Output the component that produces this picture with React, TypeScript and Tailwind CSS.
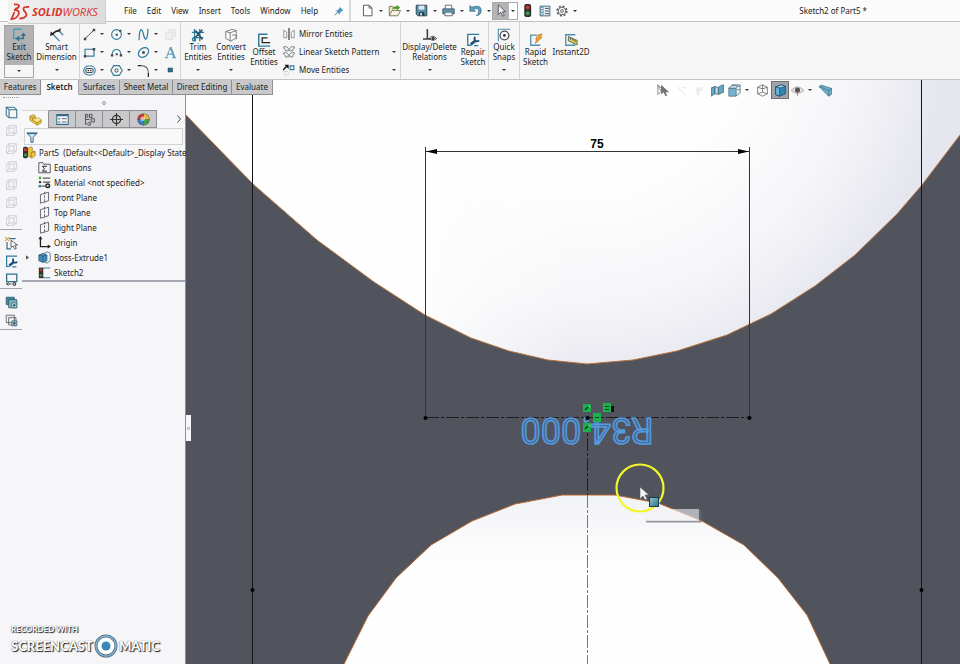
import React from 'react';

type IconName = string;

const INK = '#4a4f55';
const TEAL = '#2f7d9b';

const ICONS: Record<IconName, React.ReactNode> = {
  // ribbon
  exit: (
    <g fill="none" strokeWidth="1.6">
      <path d="M11 1.500H2V12h4" stroke="#4e9cba" />
      <path d="M6 12h7V7M10.500 9L13 6.500 15.500 9M8 9.500L5.500 12 8 14.500" stroke="#2f7391" />
    </g>
  ),
  dimension: (
    <g fill="none" stroke={INK} strokeWidth="1.300">
      <path d="M3 7Q6 3 11 3" strokeWidth="1.800" stroke="#222" />
      <path d="M0 9l1-5 4 3.500zM12 0v5.500L8 3z" fill="#222" stroke="none" />
      <path d="M4 8l7 7M10 3l5 5" stroke={TEAL} />
    </g>
  ),
  line: (
    <g>
      <path d="M2.500 13L13.500 2.500" stroke={INK} strokeWidth="1.200" />
      <path d="M1 12h3v3H1zM12 1h3v3h-3z" fill="#444" />
    </g>
  ),
  circle: (
    <g>
      <circle cx="8" cy="8" r="6" fill="none" stroke={TEAL} strokeWidth="1.300" />
      <path d="M7 7h2.500v2.500H7zM11.500 2H14v2.500h-2.500z" fill="#444" />
    </g>
  ),
  spline: <path d="M2.500 15C3-1 6-1 8 8s5 8 5.500-7" fill="none" stroke={TEAL} strokeWidth="1.500" />,
  ghost: (
    <g fill="#eeeeef" stroke="#dddde0">
      <path d="M2 5h9v9H2zM5 2h9v9" />
    </g>
  ),
  rect: (
    <g>
      <path d="M2.500 4h11v8.500h-11z" fill="none" stroke={TEAL} strokeWidth="1.400" />
      <path d="M1 11h3v3H1zM12 2.500h3v3h-3z" fill="#444" />
    </g>
  ),
  arc: (
    <g>
      <path d="M2.500 11C3 2 13 2 13.500 11" fill="none" stroke={TEAL} strokeWidth="1.300" />
      <path d="M1 10h3v3H1zM12 10h3v3h-3zM7 9h2.500v2.500H7z" fill="#444" />
    </g>
  ),
  ellipse: (
    <g>
      <ellipse cx="8" cy="8" rx="7" ry="5.200" transform="rotate(-40 8 8)" fill="none" stroke={TEAL} strokeWidth="1.500" />
      <path d="M6.500 6.500h3v3h-3z" fill="#333" />
    </g>
  ),
  sketchText: (
    <g fill="none" stroke="#5a9bbd">
      <path d="M1 14.500h4M10 14.500h5M4.500 10h6" strokeWidth="1.300" />
      <path d="M3 14L8 1.500" strokeWidth="1.200" />
      <path d="M8 1.500l5 13" strokeWidth="2.400" />
    </g>
  ),
  slot: (
    <g fill="none" strokeWidth="1.300">
      <rect x="1" y="2.500" width="14" height="11" rx="5.500" stroke={TEAL} />
      <rect x="3.500" y="5.500" width="9" height="5" rx="2" stroke={INK} />
      <path d="M6.500 7v2M9.500 7v2" stroke="#222" strokeWidth="1.500" />
    </g>
  ),
  polygon: (
    <g fill="none">
      <path d="M4.500 2h7L15 8l-3.500 6h-7L1 8z" stroke={TEAL} strokeWidth="1.400" />
      <circle cx="8" cy="8" r="2" stroke="#444" strokeWidth="1.200" />
    </g>
  ),
  fillet: (
    <g fill="none">
      <path d="M1 2h4M14 11v5" stroke="#222" strokeWidth="1.500" />
      <path d="M5 2q9 0 9 9" stroke="#6d7378" strokeWidth="1.500" />
    </g>
  ),
  point: <path d="M4 4h9v8H4z" fill="#2b6d8f" stroke="#1f4356" />,
  trim: (
    <g fill="none" stroke={TEAL} strokeWidth="1.500">
      <path d="M4 1v14M10 1v14M1 5h14M2 11h12" />
      <path d="M5 3l8 10M13 2L4 12" stroke="#27566c" strokeWidth="2" />
      <circle cx="3.500" cy="13" r="1.800" />
    </g>
  ),
  convert: (
    <g fill="#fafafa" stroke="#6e7377">
      <path d="M2 4l7-2.500L14 3v8l-6 4-6-3z" />
      <path d="M2 4l5 1.500L14 3M7 5.500V15M9 8h5v5" fill="none" />
    </g>
  ),
  offset: (
    <g fill="none">
      <path d="M12 1.500H2V15h13" stroke={TEAL} strokeWidth="1.700" />
      <path d="M12 5.500H6V11h9" stroke="#222" strokeWidth="1.500" />
    </g>
  ),
  mirror: (
    <g fill="none" stroke="#777c80">
      <path d="M1 3v10h4V5.500zM15 3v10h-4V5.500z" />
      <path d="M8 0v16" stroke="#222" strokeWidth="1.400" />
    </g>
  ),
  pattern: (
    <g fill="none" stroke="#74797e" strokeWidth="1.200">
      <path d="M1 1h4L7 3v3.500H3V4.500L1 3zM15 1h-4L9 3v3.500h4V4.500L15 3zM1 9h4l2 2v3.500H3V12.500L1 11zM15 9h-4l-2 2v3.500h4V12.500L15 11z" />
    </g>
  ),
  move: (
    <g>
      <path d="M9.500 2.500h5v5h-5z" fill="none" stroke={TEAL} strokeWidth="1.500" />
      <path d="M0 8l5-5" stroke="#111" strokeWidth="2" />
      <path d="M2 1h5.500v5.500z" fill="#111" />
      <path d="M2 10h5v4.500H2z" fill="none" stroke="#aaa" strokeDasharray="1.500 1.500" />
    </g>
  ),
  relations: (
    <g fill="none" stroke="#3c4043">
      <path d="M5 1v11M0 12.500h9" strokeWidth="1.800" />
      <path d="M7 12q4-5 8.500 0q-4 4-8.500 0" />
      <circle cx="11.500" cy="12" r="1.400" fill="#333" />
    </g>
  ),
  repair: (
    <g fill="none">
      <path d="M15 1.500H2V14h4M9 14.500h5" stroke={TEAL} strokeWidth="1.500" />
      <path d="M5.500 13l5.500-4.500" stroke="#1e4f72" strokeWidth="3" />
      <path d="M10.500 4.500a3 3 0 1 0 4.500 4" stroke="#1e4f72" strokeWidth="2.200" />
    </g>
  ),
  snaps: (
    <g fill="none">
      <path d="M1.500 15V1.500H15" stroke="#4d8fae" strokeWidth="1.200" />
      <circle cx="8.500" cy="8.500" r="5" stroke="#4a4f55" strokeWidth="1.500" />
      <circle cx="8.500" cy="8.500" r="1.600" fill="#333" />
    </g>
  ),
  rapid: (
    <g>
      <path d="M9 2.500H2V14h11" fill="none" stroke="#4d8fae" strokeWidth="1.500" />
      <path d="M10.500 2l4.500-1-2 4h2l-8 7 2-5H7.500z" fill="#f2a22c" stroke="#c26a1b" strokeWidth=".7" />
    </g>
  ),
  instant: (
    <g>
      <path d="M13 2H2v12h11" fill="none" stroke="#4d8fae" strokeWidth="1.500" />
      <path d="M5 4l10 4.500v5L5 9z" fill="#e5cf4e" stroke="#3f6547" />
      <path d="M7.500 5.500v2M10 6.500v2M12.500 8v2" stroke="#333" />
    </g>
  ),
  // quick access
  fresh: <path d="M3 1.500h7l3.500 3.500v9.500H3zM10 1.500V5h3.500" fill="#fff" stroke="#555a5f" strokeWidth="1.200" />,
  open: (
    <g>
      <path d="M1.500 14V3h4l1.500 2h5v9z" fill="#f0e4b8" stroke="#6a6d60" />
      <path d="M1.500 14.500L5 8h10.500l-3.500 6.500z" fill="#f7f3de" stroke="#6a6d60" />
      <path d="M5 7q1-5 6-4V1l4 3.500-4 3V6Q8 5 5 7z" fill="#4d9a32" />
    </g>
  ),
  save: (
    <g>
      <path d="M1.500 1.500h13v13h-11l-2-2z" fill="#5591ad" stroke="#2c4656" strokeWidth="1.200" />
      <path d="M4.500 2h7v5h-7z" fill="#dce7ec" />
      <path d="M5 10h6.500v4.500H5z" fill="#2f3d47" />
      <path d="M6.500 11h2v3h-2z" fill="#e5ebee" />
    </g>
  ),
  print: (
    <g>
      <path d="M4 6V1.500h8V6" fill="#fff" stroke="#4b5860" />
      <path d="M1 6h14v6H1z" fill="#5f9ab5" stroke="#2c4656" />
      <path d="M3.500 10h9v4.500h-9z" fill="#eef2f4" stroke="#4b5860" />
    </g>
  ),
  undo: (
    <path d="M1 2v7h7L5.500 6.500Q12 4 12 9q0 3-3 5.500 6-1 6-6.500 0-8-11.500-4z" fill="#5e9dc0" stroke="#2f6383" strokeWidth=".8" />
  ),
  select: <path d="M4 1v12l3-3 2.500 5 2-1L9 9.500h4z" fill="#f4f4f4" stroke="#44484c" />,
  traffic: (
    <g>
      <rect x="4" y="0" width="8.500" height="16" rx="2.500" fill="#2d3030" />
      <circle cx="8.200" cy="4.300" r="2.500" fill="#c63a2d" />
      <circle cx="8.200" cy="11.500" r="2.500" fill="#3f9a48" />
    </g>
  ),
  options: (
    <g>
      <path d="M1.500 1.500h13v13h-13z" fill="#e6eef2" stroke="#3c5f72" strokeWidth="1.200" />
      <path d="M2 2h4v12.500H2z" fill="#5c90a8" />
      <path d="M8 4.500h5.500M8 8h5.500M8 11.500h5.500" stroke="#3f5663" strokeWidth="1.300" />
      <path d="M3 3.500h2v2H3zM3 7h2v2H3zM3 10.500h2v2H3z" fill="#fff" />
    </g>
  ),
  gear: (
    <g fill="none" stroke="#555a5f">
      <circle cx="8" cy="8" r="6.500" strokeWidth="2" strokeDasharray="2.700 2.400" />
      <circle cx="8" cy="8" r="5" strokeWidth="1.200" />
      <circle cx="8" cy="8" r="1.900" strokeWidth="1.200" />
    </g>
  ),
  pin: (
    <g>
      <path d="M9 1l6 6-2 .5-3.500 3.500V14L2.500 7h3L9 3z" fill="#4f93c0" />
      <path d="M6 10l-5 5" stroke="#3d7ba4" strokeWidth="1.500" />
    </g>
  ),
  // side strip
  cube: (
    <g fill="none" stroke="#366f8b" strokeWidth="1.300">
      <path d="M1.500 1.500H11l3.500 3v10H5l-3.500-3z" />
      <path d="M5 4.500h9.500M5 4.500v10M1.500 1.500l3.500 3" />
    </g>
  ),
  cubeOff: (
    <g fill="none" stroke="#cfcfd2" strokeWidth="1.100">
      <path d="M2 5h9v9H2zM5 2h9v9H5zM2 5l3-3M11 5l3-3M11 14l3-3M2 14l3-3" />
    </g>
  ),
  sketchPick: (
    <g fill="none" stroke="#366f8b" strokeWidth="1.500">
      <path d="M5 2h8M2.500 6v8.500h5" />
      <path d="M0 0l5 5M0 5l5-5" stroke="#d8ab45" />
      <path d="M7.500 4v9l2.500-2 2 4 2-1-2-4h3.500z" fill="#fff" stroke="#444" strokeWidth="1" />
    </g>
  ),
  screen: (
    <g fill="none">
      <path d="M2 1.500h12.500v9H2z" stroke="#366f8b" strokeWidth="1.600" />
      <path d="M2 13.500h6M4 11.500l-2 2 2 2M10 12h3v3h-3z" stroke="#333" strokeWidth="1.200" />
    </g>
  ),
  boxes: (
    <g stroke="#2c5b6c">
      <path d="M1.500 1.500h10v9h-10z" fill="#3f8a9b" />
      <path d="M4.500 4.500h10v10h-10z" fill="#7eb6c2" />
      <path d="M8.500 8.500h6v6h-6z" fill="#e8f3f5" />
      <path d="M10.500 10.500h2v2h-2z" fill="#28586b" />
    </g>
  ),
  boxesOpen: (
    <g stroke="#51585c" fill="#f1f1f1">
      <path d="M1.500 1.500h10v9h-10zM4.500 4.500h9v9h-9z" />
      <path d="M8.500 8.500h6v6h-6z" fill="#a9d0da" stroke="#2c5b6c" />
      <path d="M10.500 10.500h2v2h-2z" fill="#28586b" />
    </g>
  ),
  // feature tree
  part: (
    <g stroke="#9c7720" strokeWidth=".8" strokeLinejoin="round">
      <path d="M1 4l4-2 3 2v3l4-1 3 2v4l-5 3L1 9z" fill="#eec543" />
      <path d="M1 4l3.500 2L8 4M4.500 6v3l5.500 3 5-3.500M10 12v3M8 7l-3.500 2" fill="none" />
      <path d="M5 8.500L8 7l4-.5 2.500 1.500-4.500 3z" fill="#f9e793" stroke="none" />
    </g>
  ),
  partRoot: (
    <g>
      <path d="M6 3l4-2 1.500 1v4l3.500 1v5l-4 3-5-3z" fill="#efc748" stroke="#94701e" strokeWidth=".8" />
      <path d="M10 8l5-1M10 8v6" stroke="#94701e" fill="none" />
      <rect x="0" y="1" width="6" height="14" rx="2" fill="#2f3131" />
      <circle cx="3" cy="4.500" r="2" fill="#cf3c2e" />
      <circle cx="3" cy="11" r="2" fill="#3e9a47" />
    </g>
  ),
  list: (
    <g>
      <path d="M1 2h14v12H1z" fill="#f6fafb" stroke="#386c86" strokeWidth="1.300" />
      <path d="M1 2h14v2H1z" fill="#386c86" />
      <path d="M3 6h2v2H3zM3 10h2v2H3z" fill="#3988ac" />
      <path d="M7 7h6M7 11h6" stroke="#444" />
    </g>
  ),
  config: (
    <g fill="none" stroke="#50555a" strokeWidth="1.200">
      <path d="M3 1v13M3 2h3v3H3M6 12h3v3H6M3 8h5M8 1.500h3v4H8zM10 7h4v4h-4zM3 13.500h3" />
    </g>
  ),
  target: (
    <g fill="none" stroke="#333">
      <circle cx="8" cy="8" r="5" strokeWidth="1.600" />
      <path d="M8 0v16M0 8h16" strokeWidth="1.400" />
    </g>
  ),
  ball: (
    <g>
      <circle cx="8" cy="8" r="7.500" fill="#3a3a3a" />
      <path d="M8 8V1a7 7 0 0 1 7 7z" fill="#e9b93a" />
      <path d="M8 8H1a7 7 0 0 1 7-7z" fill="#c8362e" />
      <path d="M8 8h7a7 7 0 0 1-7 7z" fill="#45a04b" />
      <path d="M8 8v7a7 7 0 0 1-7-7z" fill="#3f7fc4" />
      <circle cx="7" cy="7" r="2.800" fill="#fff" opacity=".6" />
    </g>
  ),
  filter: (
    <g>
      <path d="M1 2.500h14L9.500 8.500V15h-3V8.500z" fill="#dbeaf1" stroke="#2e6d8c" strokeWidth="1.300" />
      <path d="M2 3.500h12" stroke="#2e6d8c" strokeWidth="1.500" />
    </g>
  ),
  equations: (
    <g fill="none" stroke="#55595d" strokeWidth="1.200">
      <path d="M1 14.500V2h5l1 2h8v10.500z" />
      <path d="M11 6.500H5.500L8 9.500l-2.500 3H11" stroke="#222" />
    </g>
  ),
  material: (
    <g>
      <path d="M6 2.500h9M6 7.500h9M5 12.500h4" stroke="#555" strokeWidth="1.500" />
      <circle cx="2.500" cy="2.500" r="1.800" fill="#68a34a" />
      <path d="M1.200 6.200h2.600v2.600H1.200z" fill="#333" />
      <circle cx="2.500" cy="12.500" r="1.800" fill="#3d8096" />
      <circle cx="12" cy="12" r="2.200" fill="none" stroke="#222" strokeWidth="1.800" />
    </g>
  ),
  plane: (
    <g fill="none" stroke="#565a5e" strokeWidth="1.100">
      <path d="M3 4.500l10-3v10.500l-10 3z" />
      <path d="M8 1v14" strokeDasharray="3 1.500" />
    </g>
  ),
  origin: (
    <g stroke="#222" strokeWidth="1.600" fill="none">
      <path d="M3 2v11h10" />
      <path d="M3 0l2.500 4h-5zM16 13l-4 2.500v-5z" fill="#222" stroke="none" />
    </g>
  ),
  extrude: (
    <g stroke="#2f5d76" strokeWidth=".9">
      <path d="M7 3l5-2 3 2v9l-4 3-4-2z" fill="#f1f5f6" />
      <path d="M1 5l5-2 5 2v7l-5 2-5-2z" fill="#3e8cb5" />
      <path d="M1 5l5 1.500L11 5M6 6.500V14" fill="none" />
    </g>
  ),
  sketch: (
    <g>
      <path d="M6 2.500h9M6 14.500h9" fill="none" stroke="#3f8099" strokeWidth="1.300" />
      <rect x="1" y="2" width="5.500" height="13" fill="#33302e" />
      <circle cx="3.700" cy="5" r="1.700" fill="#bd3a2d" />
      <circle cx="3.700" cy="11.500" r="1.700" fill="#42984a" />
    </g>
  ),
  // heads-up view bar
  pick: (
    <g>
      <path d="M5 1v12l3-3 2.500 5 2-1-2-4H15z" fill="#6f7276" />
      <path d="M1 1v12l4-4z" fill="#fff" stroke="#777" />
      <path d="M1 1l7 7" stroke="#777" />
    </g>
  ),
  faint: <path d="M3 3l9 10M8 4l5 1" stroke="#dfdfe1" fill="none" />,
  faintBox: <path d="M3 4h9v5H8v5H5z" fill="#ececee" />,
  section: (
    <g stroke="#37606f" strokeWidth=".9">
      <path d="M0 5l5-2v9l-5 3z" fill="#67a6c0" />
      <path d="M5 3l4 1.500v8L5 12z" fill="#c9e0e9" />
      <path d="M9 4l3-2 3.500-1v9L9 13z" fill="#67a6c0" />
    </g>
  ),
  orient: (
    <g stroke="#4a6d7c" strokeWidth=".9">
      <path d="M5 1h10v10l-4 3H5z" fill="#e9eff2" />
      <path d="M8 1v12M11 3h4M11 7h4" fill="none" />
      <path d="M1 5h9v10H1z" fill="#75b4d0" />
      <path d="M1 5l3-3h8l-2 3z" fill="#d8ebf3" />
    </g>
  ),
  wire: (
    <g fill="none" stroke="#666b70">
      <path d="M2 4l6-3 6 3v8l-6 3-6-3zM2 4l6 2 6-2M8 1v9M8 10l6 2M8 10l-6 2" />
    </g>
  ),
  shaded: (
    <g stroke="#174a68" strokeWidth=".9">
      <path d="M2 3.500L9 1l5 2v9l-7 3-5-2z" fill="#3187b4" />
      <path d="M2 3.500L7 5l7-2-5-2z" fill="#a5d5e9" />
      <path d="M2 3.500L7 5v10l-5-2z" fill="#67b4d6" />
    </g>
  ),
  eye: (
    <g>
      <path d="M0 8q8-9 16 0q-8 7-16 0z" fill="#e4e4e5" stroke="#a0a2a5" />
      <circle cx="8" cy="7.500" r="3.200" fill="#5b5457" />
      <path d="M8 11v4" stroke="#888" />
    </g>
  ),
  tape: (
    <g stroke="#3a6b80" strokeWidth=".9" strokeLinejoin="round">
      <path d="M0 3l3-1.500 12.500 4v7L12 15z" fill="#6fb1cc" />
      <path d="M0 3l12 5 3.500-2.500M12 8v7" fill="none" />
    </g>
  ),
};

const Icon = ({ name, className = 'size-3' }: { name: IconName; className?: string }) => (
  <svg viewBox="0 0 16 16" className={`shrink-0 ${className}`} aria-hidden="true">
    {ICONS[name]}
  </svg>
);

const Caret = () => (
  <svg viewBox="0 0 4 2" className="h-[2px] w-1 shrink-0" aria-hidden="true">
    <path d="M0 0h4L2 2z" fill="#333" />
  </svg>
);

const Divider = () => <div className="w-px shrink-0 bg-[#d3d3d5]" />;

const MENUS = ['File', 'Edit', 'View', 'Insert', 'Tools', 'Window', 'Help'];

const QUICK = [
  { icon: 'fresh', label: 'New' },
  { icon: 'open', label: 'Open' },
  { icon: 'save', label: 'Save' },
  { icon: 'print', label: 'Print' },
  { icon: 'undo', label: 'Undo' },
];

const SKETCH_TOOLS = [
  ['line', 'circle', 'spline', 'ghost'],
  ['rect', 'arc', 'ellipse', 'sketchText'],
  ['slot', 'polygon', 'fillet', 'point'],
];

const TABS = [
  { label: 'Features', width: 'w-[41px]' },
  { label: 'Sketch', width: 'w-[38px]' },
  { label: 'Surfaces', width: 'w-[41px]' },
  { label: 'Sheet Metal', width: 'w-[53px]' },
  { label: 'Direct Editing', width: 'w-[59px]' },
  { label: 'Evaluate', width: 'w-[41px]' },
];

const TREE = [
  { icon: 'equations', label: 'Equations' },
  { icon: 'material', label: 'Material <not specified>' },
  { icon: 'plane', label: 'Front Plane' },
  { icon: 'plane', label: 'Top Plane' },
  { icon: 'plane', label: 'Right Plane' },
  { icon: 'origin', label: 'Origin' },
  { icon: 'extrude', label: 'Boss-Extrude1', expandable: true },
  { icon: 'sketch', label: 'Sketch2' },
];

const STRIP = [
  ['cube', 'cubeOff', 'cubeOff', 'cubeOff', 'cubeOff', 'cubeOff', 'cubeOff'],
  ['sketchPick', 'repair', 'screen'],
  ['boxes', 'boxesOpen'],
];

const Logo = () => (
  <div className="ml-2 flex h-6 w-[98px] items-center border-r border-b border-[#cfcfcf] bg-linear-to-r from-[#f3f3f3] to-[#dcdcdc] pl-[2px]">
    <svg viewBox="0 0 20 18" className="h-[18px] w-5" fill="none" stroke="#d5352c" strokeWidth="1.800" aria-hidden="true">
      <path d="M4 1.500Q10 1 9 3.500 8 5.500 5 6" />
      <path d="M4 7Q10.500 7 8.500 11.500 6.500 16 1.500 16L4.500 9" />
      <path d="M19 4Q13 3.500 13.500 6q0 1.500 2 3.500Q17.500 12 15.500 13.500 14 15.500 9.500 15.500" />
    </svg>
    <span className="ml-[2px] font-['Open_Sans',sans-serif] text-[11px] leading-none text-[#d5352c] italic">
      <b>SOLID</b>WORKS
    </span>
  </div>
);

const TopBar = () => (
  <header className="relative z-20 flex h-[21px] shrink-0 items-center bg-[#fbfbfb]">
    <div className="self-start">
      <Logo />
    </div>
    <nav className="ml-[13px] flex w-[225px] items-center">
      {MENUS.map((m) => (
        <button key={m} className="px-[5px] whitespace-nowrap">
          {m}
        </button>
      ))}
      <button aria-label="Pin" className="ml-auto">
        <Icon name="pin" className="size-[10px]" />
      </button>
    </nav>
    <div className="ml-[5px] flex h-full items-center border-l-2 border-[#d9d9db] pl-2">
      {QUICK.map((q) => (
        <button key={q.label} aria-label={q.label} className="flex w-[27px] items-center gap-1">
          <span className="flex w-4 justify-center">
            <Icon name={q.icon} className="size-[13px]" />
          </span>
          <Caret />
        </button>
      ))}
      <button aria-label="Select" className="-ml-[2px] flex h-[18px] w-[26px] border border-[#a9a9ab] bg-white">
        <span className="flex h-full w-4 items-center justify-center bg-[#b4b4b6]">
          <Icon name="select" className="size-[13px]" />
        </span>
        <span className="flex h-full flex-1 items-center justify-center">
          <Caret />
        </span>
      </button>
      <button aria-label="Rebuild" className="ml-[3px] w-[13px]">
        <Icon name="traffic" className="size-[13px]" />
      </button>
      <button aria-label="File properties" className="ml-[5px]">
        <Icon name="options" className="size-[12px]" />
      </button>
      <button aria-label="Options" className="ml-[5px] flex items-center gap-[5px]">
        <Icon name="gear" className="size-[12px]" />
        <Caret />
      </button>
    </div>
    <h1 className="mr-[93px] ml-auto whitespace-nowrap">Sketch2 of Part5 *</h1>
  </header>
);

type ToolProps = { icon: IconName; lines: string[]; width: string; caret?: boolean };

const Tool = ({ icon, lines, width, caret }: ToolProps) => (
  <button className={`flex shrink-0 flex-col items-center ${width} ${caret ? 'pt-[6px]' : 'pt-[11px]'}`}>
    <Icon name={icon} className="size-[14px]" />
    {lines.map((l) => (
      <span key={l} className="whitespace-nowrap">
        {l}
      </span>
    ))}
    {caret && (
      <span className="mt-[7px]">
        <Caret />
      </span>
    )}
  </button>
);

const Ribbon = () => (
  <section className="flex h-[59px] shrink-0 border-t border-b border-[#c3c3c5] bg-[#f6f6f7]">
    <button className="mt-[3px] ml-1 flex h-[53px] w-[30px] shrink-0 flex-col border border-[#a5a5a7] bg-[#f6f6f7]">
      <span className="flex h-[39px] w-full flex-col items-center bg-[#b2b2b4] pt-[2px]">
        <Icon name="exit" className="size-[14px]" />
        <span>Exit</span>
        <span>Sketch</span>
      </span>
      <span className="flex w-full flex-1 items-center justify-center">
        <Caret />
      </span>
    </button>
    <Tool icon="dimension" lines={['Smart', 'Dimension']} width="w-[45px]" caret />
    <Divider />
    <div className="flex w-[100px] shrink-0 flex-col pt-[3px] pl-px">
      {SKETCH_TOOLS.map((row) => (
        <div key={row[0]} className="flex h-[18px] items-center">
          {row.map((t, i) => (
            <button key={t} aria-label={t} className={`flex items-center gap-[3px] ${i < 3 ? 'w-[27px]' : 'w-4'}`}>
              <span className="flex w-4 justify-center">
                <Icon name={t} className={t === 'point' ? 'size-2' : 'size-[13px]'} />
              </span>
              {i < 3 && <Caret />}
            </button>
          ))}
        </div>
      ))}
    </div>
    <Divider />
    <Tool icon="trim" lines={['Trim', 'Entities']} width="w-[34px]" caret />
    <Tool icon="convert" lines={['Convert', 'Entities']} width="w-8" caret />
    <Tool icon="offset" lines={['Offset', 'Entities']} width="w-[34px]" />
    <div className="flex w-[119px] shrink-0 flex-col pt-[3px]">
      {[
        { icon: 'mirror', label: 'Mirror Entities' },
        { icon: 'pattern', label: 'Linear Sketch Pattern', caret: true },
        { icon: 'move', label: 'Move Entities', caret: true },
      ].map((r) => (
        <button key={r.label} className="flex h-[18px] items-center pr-1 pl-[2px]">
          <Icon name={r.icon} className="size-3" />
          <span className="mr-auto ml-1 whitespace-nowrap">{r.label}</span>
          {r.caret && <Caret />}
        </button>
      ))}
    </div>
    <Divider />
    <Tool icon="relations" lines={['Display/Delete', 'Relations']} width="w-[57px]" caret />
    <Tool icon="repair" lines={['Repair', 'Sketch']} width="w-[30px]" />
    <Divider />
    <Tool icon="snaps" lines={['Quick', 'Snaps']} width="w-[30px]" caret />
    <Divider />
    <Tool icon="rapid" lines={['Rapid', 'Sketch']} width="w-[31px]" />
    <Tool icon="instant" lines={['Instant2D']} width="w-[40px]" />
  </section>
);

const Tabs = () => (
  <nav className="relative z-10 -mb-[15px] flex h-[15px] shrink-0 self-start">
    {TABS.map((t) => (
      <button
        key={t.label}
        className={`border-r border-b whitespace-nowrap ${t.width} ${
          t.label === 'Sketch'
            ? 'border-[#a4a4a6] border-b-transparent bg-[#f8f8f9] font-semibold'
            : 'border-[#8f8f91] bg-[#c9c9cb]'
        }`}
      >
        {t.label}
      </button>
    ))}
  </nav>
);

const Watermark = () => (
  <div className="absolute bottom-[6px] left-[11px] font-['Lato',sans-serif] font-black text-white [text-shadow:1px_1px_1px_#222,0_0_1px_#333]">
    <div className="text-[8px] leading-[10px]">RECORDED WITH</div>
    <div className="flex items-center text-[13px] leading-6">
      SCREENCAST
      <svg viewBox="0 0 24 24" className="mx-px size-6" aria-hidden="true">
        <circle cx="12" cy="12" r="10" fill="#fff" stroke="#4d6f85" strokeWidth="3" />
        <circle cx="12" cy="12" r="10" fill="none" stroke="#7fb0cc" strokeWidth="1.500" />
        <circle cx="12" cy="12" r="4.500" fill="#3b86b8" />
      </svg>
      MATIC
    </div>
  </div>
);

const Sidebar = () => (
  <aside className="relative flex w-[186px] shrink-0 border-r border-[#8d8f94] bg-[#f6f6f8] pt-[15px]">
    <div className="flex w-[22px] shrink-0 flex-col items-center">
      <div className="mt-[2px] mb-[5px] w-4 border-t border-dotted border-[#999]" />
      {STRIP.map((group, g) => (
        <div key={g} className="mb-1 flex w-full flex-col items-center border-b border-[#a3a6ab]">
          {group.map((name, i) => (
            <button key={i} aria-label={name} className="flex h-[18px] items-center">
              <Icon name={name} className="size-[13px]" />
            </button>
          ))}
        </div>
      ))}
    </div>
    <div className="flex min-w-0 flex-1 flex-col">
      <div className="flex h-[15px] items-center justify-center">
        <span className="size-1 rounded-full border border-[#999]" />
      </div>
      <div className="flex h-[18px] items-stretch">
        {['part', 'list', 'config', 'target', 'ball'].map((name, i) => (
          <button
            key={name}
            aria-label={name}
            className={`flex w-[27px] items-center justify-center border-r border-[#8e8e90] ${
              i === 0 ? 'border-t border-t-[#d5d5d7] bg-[#f8f8f9]' : 'border-t border-b bg-[#c9c9cb]'
            }`}
          >
            <Icon name={name} className="size-[13px]" />
          </button>
        ))}
        <button aria-label="More" className="ml-auto pr-1">
          <svg viewBox="0 0 4 8" className="h-2 w-1" fill="none" stroke="#444" aria-hidden="true">
            <path d="M.5.5L3.500 4 .5 7.500" />
          </svg>
        </button>
      </div>
      <label className="mx-[2px] flex h-[17px] items-center border border-[#d2d2d5] bg-[#f9f9fa] pl-px">
        <Icon name="filter" className="size-3" />
        <input aria-label="Filter" className="min-w-0 flex-1 bg-transparent outline-none" />
      </label>
      <ul className="border-b-2 border-[#a5a8b3]">
        <li className="flex h-[15px] items-center gap-[3px] pl-px">
          <Icon name="partRoot" className="size-[13px]" />
          <span className="whitespace-pre">{'Part5  (Default<<Default>_Display State'}</span>
        </li>
        {TREE.map((n) => (
          <li key={n.label} className="flex h-[15px] items-center">
            <span className="flex w-[16px] pl-1">
              {n.expandable && (
                <svg viewBox="0 0 4 6" className="h-[5px] w-[3px]" aria-hidden="true">
                  <path d="M0 0l4 3-4 3z" fill="#555" />
                </svg>
              )}
            </span>
            <Icon name={n.icon} className="size-[13px]" />
            <span className="ml-[3px] whitespace-nowrap">{n.label}</span>
          </li>
        ))}
      </ul>
    </div>
    <Watermark />
  </aside>
);

const UPPER =
  '0,35 27,63 67,104 131,160 188,202 239,235 285,258 323,271 362,280 401,284 447,280 491,271 541,255 585,234 629,206 669,175 711,134 736,105 774,55';
const LOWER =
  '158,584 182,536 210,498 245,465 286,441 329,424 376,415 429,415 472,423 516,441 558,465 592,498 621,535 644,584';

const Model = () => (
  <svg viewBox="0 0 774 584" preserveAspectRatio="xMidYMin slice" className="absolute inset-0 size-full">
    <defs>
      <radialGradient id="upper" gradientUnits="userSpaceOnUse" cx="390" cy="-60" r="375">
        <stop offset=".45" stopColor="#fefefe" />
        <stop offset=".75" stopColor="#f6f6f9" />
        <stop offset="1" stopColor="#e5e6ee" />
      </radialGradient>
      <linearGradient id="lower" x1="0" y1="0" x2="0" y2="1">
        <stop offset="0" stopColor="#f1f2f5" />
        <stop offset=".4" stopColor="#fefefe" />
      </linearGradient>
      <linearGradient id="left" x1="0" y1="0" x2="1" y2="0">
        <stop offset=".3" stopColor="#fefefe" />
        <stop offset=".5" stopColor="#fefefe" stopOpacity="0" />
      </linearGradient>
      <linearGradient id="marker" x1="0" y1="0" x2="1" y2="1">
        <stop offset="0" stopColor="#8cc3d3" />
        <stop offset="1" stopColor="#2f7288" />
      </linearGradient>
    </defs>
    <rect width="774" height="584" fill="#51535d" />
    <polygon points={`0,0 ${UPPER} 774,0`} fill="url(#upper)" />
    <polygon points={`0,0 ${UPPER} 774,0`} fill="url(#left)" />
    <polyline points={UPPER} fill="none" stroke="#b5713a" />
    <polygon points={LOWER} fill="url(#lower)" />
    <polyline points={LOWER} fill="none" stroke="#b5662f" />

    <path d="M66.500 0V584M735.500 0V584" stroke="#15161a" />
    <circle cx="66.500" cy="510" r="2" />
    <circle cx="735.500" cy="510" r="2" />

    {/* 75 mm dimension */}
    <path d="M239.500 67V338M563.500 67V338M240 71.500H563" stroke="#333438" fill="none" />
    <path d="M240 71.500l11-2.500v5zM563 71.500l-11-2.500v5z" />
    <text x="411" y="68" textAnchor="middle" fontSize="12" fontWeight="700" fontFamily="Liberation Sans, sans-serif">
      75
    </text>

    {/* centre lines */}
    <path d="M240 337.500H563" stroke="#1d1e22" strokeDasharray="13 2 3 2" />
    <path d="M401.500 338V415" stroke="#1d1e22" strokeDasharray="13 2 3 2" />
    <path d="M401.500 415V584" stroke="#77787d" strokeDasharray="13 2 3 2" />
    <circle cx="239.500" cy="338" r="2" />
    <circle cx="563.500" cy="338" r="2" />

    <text
      transform="rotate(180 401 351)"
      x="401"
      y="364"
      textAnchor="middle"
      fontSize="36"
      fontFamily="Roboto, sans-serif"
      fill="#4a6a92"
      stroke="#559be0"
      strokeWidth="1.500"
    >
      R34.000
    </text>

    {/* relation badges */}
    <g fill="#19b14b">
      <path d="M397 324h8v8h-8zM417 323h8v9h-8zM407 333h8v9h-8zM397 343h8v9h-8z" />
      <path d="M399 330l4-4M399 349l4-4" stroke="#0b3b20" strokeWidth="1.500" />
      <path d="M402 326l2 1M402 345l2 1" stroke="#bfe8f5" />
      <path d="M419 326.500h4M419 329.500h4M409 337.500h4" stroke="#0b3b20" />
      <path d="M425 326h3v6h-3z" fill="#111" />
    </g>
    <circle cx="401.500" cy="338" r="2" />

    {/* pointer */}
    <path d="M460 441.500H514.500V430" fill="none" stroke="#6d6e74" strokeWidth="2" opacity=".7" />
    <rect x="459" y="429" width="54" height="12" fill="#f1f1f4" opacity=".6" />
    <circle cx="454" cy="408" r="23.500" fill="none" stroke="#f4f62c" strokeWidth="2.200" />
    <path d="M454 407v12l3-3 2 4 2-1-2-4h4z" fill="#f5f5f5" stroke="#5a5c63" strokeWidth=".6" />
    <rect x="463.500" y="417.500" width="9" height="9" fill="url(#marker)" stroke="#173c4b" />
  </svg>
);

const VIEW_TOOLS = [
  { icon: 'pick' },
  { icon: 'faint' },
  { icon: 'faintBox' },
  { icon: 'section' },
  { icon: 'orient', caret: true },
  { icon: 'wire' },
  { icon: 'shaded', active: true },
  { icon: 'eye', caret: true },
  { icon: 'tape' },
];

const Viewport = () => (
  <main className="relative min-w-0 flex-1 overflow-hidden">
    <Model />
    <div className="absolute top-px right-[126px] flex items-center">
      {VIEW_TOOLS.map((v) => (
        <button
          key={v.icon}
          aria-label={v.icon}
          className={`flex h-[18px] items-center gap-1 ${v.caret ? 'w-[27px] pl-[2px]' : 'w-[18px] justify-center'} ${
            v.active ? 'border border-[#6d6f73] bg-[#a0a3a8]' : ''
          }`}
        >
          <Icon name={v.icon} className="size-[13px]" />
          {v.caret && <Caret />}
        </button>
      ))}
    </div>
    <button
      aria-label="Collapse panel"
      className="absolute top-[335px] left-0 flex h-[26px] w-[5px] items-center justify-center bg-[#f6f6f8]"
    >
      <span className="size-[3px] rounded-full border border-[#999]" />
    </button>
  </main>
);

const App: React.FC = () => {
  return (
    <div className="flex h-screen flex-col overflow-hidden bg-[#f6f6f8] font-['Noto_Sans','Open_Sans',sans-serif] text-[8px] leading-[10px] text-[#222]">
      <TopBar />
      <Ribbon />
      <Tabs />
      <div className="flex min-h-0 flex-1">
        <Sidebar />
        <Viewport />
      </div>
    </div>
  );
};

export default App;
